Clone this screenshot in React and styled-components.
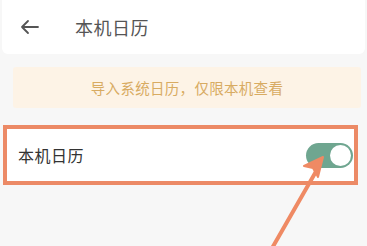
import styled, {createGlobalStyle} from "styled-components";

const Global = createGlobalStyle`
  html, body {
    margin: 0;
    padding: 0;
    background: #f7f7f7;
    font-family: "Noto Sans CJK SC", "Noto Sans", sans-serif;
  }
`

const Page = styled.div`
  position: relative;
  width: 367px;
  height: 246px;
  overflow: hidden;
  background: #f7f7f7;
`

const Header = styled.div`
  display: flex;
  align-items: center;
  height: 54px;
  margin: 0 2px;
  padding-left: 18px;
  background: #fff;
  border-radius: 0 0 6px 6px;
`

const Back = styled.div`
  display: flex;
  width: 22px;
  margin-right: 33px;
`

const Title = styled.div`
  font-size: 18px;
  color: #555;
  letter-spacing: 0.5px;
`

const Notice = styled.div`
  display: flex;
  align-items: center;
  justify-content: center;
  height: 41px;
  margin: 13px 6px 0 13px;
  background: #fdf3e6;
  border-radius: 3px;
  color: #d8ab62;
  font-size: 14.5px;
  letter-spacing: 0.3px;
`

const Row = styled.div`
  display: flex;
  align-items: center;
  justify-content: space-between;
  box-sizing: border-box;
  height: 60px;
  margin: 17px 9px 0 3px;
  padding: 0 1px 0 11px;
  background: #fff;
  border: 4px solid #ec8a66;
`

const Label = styled.div`
  font-size: 16px;
  color: #333;
  letter-spacing: 0.5px;
`

const Toggle = styled.div`
  display: flex;
  align-items: center;
  justify-content: flex-end;
  box-sizing: border-box;
  width: 47px;
  height: 25px;
  padding: 0 2px;
  border-radius: 13px;
  background: ${p => (p.on ? "#6fa690" : "#ccc")};
`

const Knob = styled.div`
  width: 21px;
  height: 21px;
  border-radius: 50%;
  background: #fff;
`

const Pointer = styled.svg`
  position: absolute;
  left: 0;
  top: 0;
  pointer-events: none;
`

const App = () => {
    return (
        <Page>
            <Global/>
            <Header>
                <Back>
                    <svg width="20" height="16" viewBox="0 0 20 16" fill="none" stroke="#555" strokeWidth="1.8" strokeLinecap="round" strokeLinejoin="round">
                        <path d="M18 8H2M8 2L2 8l6 6"/>
                    </svg>
                </Back>
                <Title>本机日历</Title>
            </Header>
            <Notice>导入系统日历，仅限本机查看</Notice>
            <Row>
                <Label>本机日历</Label>
                <Toggle on>
                    <Knob/>
                </Toggle>
            </Row>
            <Pointer width="367" height="246">
                <line x1="271" y1="250" x2="318" y2="168" stroke="#ef8a64" strokeWidth="4" strokeLinecap="round"/>
                <path d="M323 157 L304 166 L313 168 L318 177 Z" fill="#ef8a64" stroke="#ef8a64" strokeWidth="2" strokeLinejoin="round"/>
            </Pointer>
        </Page>
    )
}

export default App
